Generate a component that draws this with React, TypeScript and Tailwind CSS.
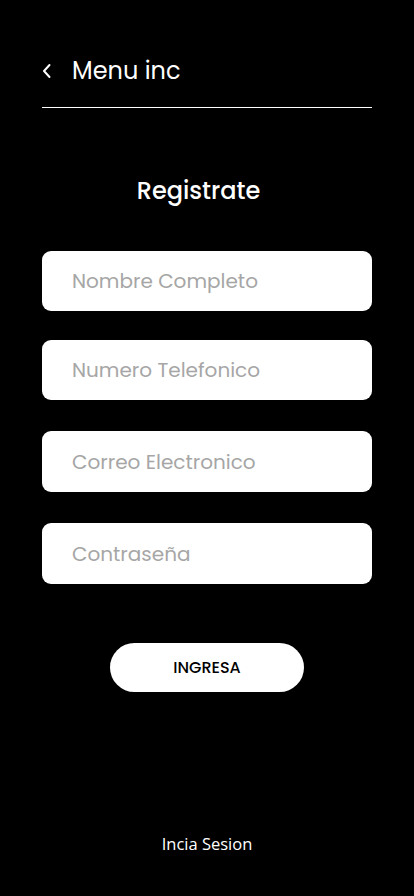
import React from "react";

const font = { fontFamily: "Poppins, 'Noto Sans', 'Open Sans', sans-serif" };

export default function App() {
  const fields = [
    { t: "Nombre Completo", c: "h-[60px]" },
    { t: "Numero Telefonico", c: "h-[60px] mt-[29px]" },
    { t: "Correo Electronico", c: "h-[61px] mt-[31px]" },
    { t: "Contraseña", c: "h-[61px] mt-[31px]" },
  ];
  return (
    <div className="min-h-[896px] w-full bg-black text-white" style={font}>
      <div className="px-[42px] pt-[53px]">
        <div className="flex h-[36px] items-center">
          <svg width="12" height="16" viewBox="0 0 12 16" className="-ml-[1px]">
            <path d="M8.5 2 L3 8 L8.5 14" fill="none" stroke="white" strokeWidth="2" strokeLinecap="round" strokeLinejoin="round" />
          </svg>
          <span className="ml-[19px] text-[24px] leading-none">Menu inc</span>
        </div>
        <div className="mt-[18px] h-px bg-white" />
        <h1 className="mt-[68px] pr-[17px] text-center text-[24px] font-medium leading-[30px]">Registrate</h1>
        <div className="mt-[45px] flex flex-col">
          {fields.map((f) => (
            <div
              key={f.t}
              className={`flex items-center rounded-[9px] bg-white pl-[30px] text-[20px] text-[#a6a6a6] ${f.c}`}
            >
              {f.t}
            </div>
          ))}
        </div>
        <div className="mt-[59px] flex justify-center">
          <button className="h-[49px] w-[194px] rounded-full bg-white text-[16px] font-medium text-black">INGRESA</button>
        </div>
        <div className="mt-[140px] text-center text-[16.5px]" style={{ fontFamily: "'Open Sans', sans-serif" }}>
          Incia Sesion
        </div>
      </div>
    </div>
  );
}
